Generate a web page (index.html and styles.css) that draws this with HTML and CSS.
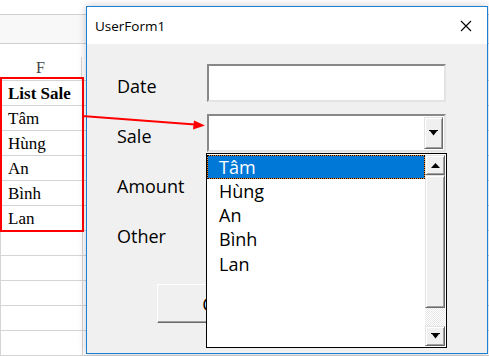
FILE: index.html
```html
<!DOCTYPE html>
<html lang="en">
<head>
  <meta charset="UTF-8" />
  <title>UserForm1</title>
  <link rel="stylesheet" href="styles.css">
</head>
<body>
  <!-- worksheet behind the form -->
  <div class="sheet">
    <div class="sheet-bar"></div>
    <div class="sheet-formula"></div>
    <div class="sheet-head"><div class="col-f">F</div></div>
    <div class="row"><div class="cell bold">List Sale</div></div>
    <div class="row"><div class="cell">Tâm</div></div>
    <div class="row"><div class="cell">Hùng</div></div>
    <div class="row"><div class="cell">An</div></div>
    <div class="row"><div class="cell">Bình</div></div>
    <div class="row"><div class="cell">Lan</div></div>
    <div class="row"><div class="cell"></div></div>
    <div class="row"><div class="cell"></div></div>
    <div class="row"><div class="cell"></div></div>
    <div class="row"><div class="cell"></div></div>
    <div class="row"><div class="cell"></div></div>
  </div>
  <div class="mark-box"></div>

  <!-- the form window -->
  <div class="dialog">
    <div class="titlebar">
      <span class="title">UserForm1</span>
      <svg class="close" width="12" height="12" viewBox="0 0 12 12">
        <path d="M1 1 L11 11 M11 1 L1 11" stroke="#000" stroke-width="1.1" fill="none"/>
      </svg>
    </div>
    <div class="form">
      <div class="field-row">
        <label>Date</label>
        <div class="textbox"></div>
      </div>
      <div class="field-row">
        <label>Sale</label>
        <div class="combo-wrap">
          <div class="combo">
            <div class="combo-btn">
              <svg width="9" height="6" viewBox="0 0 9 6"><path d="M0 0 H9 V1 H8 L4.5 5.5 L1 1 H0 Z" fill="#000"/></svg>
            </div>
          </div>
          <div class="droplist">
            <div class="items">
              <div class="item selected">Tâm</div>
              <div class="item">Hùng</div>
              <div class="item">An</div>
              <div class="item">Bình</div>
              <div class="item">Lan</div>
            </div>
            <div class="scrollbar">
              <div class="sb-btn">
                <svg width="9" height="5" viewBox="0 0 9 5"><path d="M4.5 0 L9 5 H0 Z" fill="#000"/></svg>
              </div>
              <div class="sb-thumb"></div>
              <div class="sb-track"></div>
              <div class="sb-btn">
                <svg width="9" height="6" viewBox="0 0 9 6"><path d="M0 0 H9 V1 H8 L4.5 5.5 L1 1 H0 Z" fill="#000"/></svg>
              </div>
            </div>
          </div>
        </div>
      </div>
      <div class="field-row">
        <label>Amount</label>
        <div class="textbox"></div>
      </div>
      <div class="field-row">
        <label>Other</label>
        <div class="textbox"></div>
      </div>
      <div class="btn-row">
        <button class="btn">Clear</button>
      </div>
    </div>
  </div>

  <svg class="arrow" width="489" height="356" viewBox="0 0 489 356">
    <line x1="82" y1="116" x2="195" y2="124.5" stroke="#f00" stroke-width="2"/>
    <polygon points="205,125.5 193,129.5 194,120.5" fill="#f00"/>
  </svg>
</body>
</html>
```

FILE: styles.css
```css
body {
  margin: 0;
  width: 489px;
  height: 356px;
  overflow: hidden;
  position: relative;
  background: #fff;
}

/* worksheet */
.sheet {
  font-family: "Liberation Serif", serif;
  color: #000;
}

.sheet-bar {
  height: 14px;
  border-bottom: 1px solid #d0d0d0;
}

.sheet-formula {
  height: 28px;
  background: #f8f8f8;
  border-bottom: 1px solid #d0d0d0;
}

.sheet-head {
  height: 36px;
  display: flex;
  align-items: flex-end;
  border-bottom: 1px solid #d4d4d4;
}

.col-f {
  width: 81px;
  height: 23px;
  border-right: 1px solid #d4d4d4;
  text-align: center;
  font-size: 16px;
  line-height: 22px;
  color: #444;
}

.row {
  height: 24px;
  border-bottom: 1px solid #d4d4d4;
}

.cell {
  width: 74px;
  height: 24px;
  padding-left: 7px;
  border-right: 1px solid #d4d4d4;
  border-left: 1px solid #d4d4d4;
  font-size: 17px;
  line-height: 26px;
  white-space: nowrap;
}

.cell.bold {
  font-weight: bold;
}

.mark-box {
  position: absolute;
  left: 0;
  top: 77px;
  width: 80px;
  height: 151px;
  border: 2px solid #f00;
}

/* form window */
.dialog {
  position: absolute;
  left: 86px;
  top: 6px;
  width: 400px;
  height: 346px;
  border: 1px solid #1a7fd6;
  background: #f0f0f0;
  box-shadow: 0 0 8px rgba(0, 0, 0, 0.22);
  font-family: "Open Sans", sans-serif;
  color: #000;
}

.titlebar {
  height: 37px;
  background: #fff;
  display: flex;
  align-items: center;
  justify-content: space-between;
  padding: 0 15px 0 8px;
}

.title {
  font-size: 13.5px;
}

.close {
  margin-top: 1px;
}

.form {
  padding: 20px 0 0 30px;
}

.field-row {
  display: flex;
  align-items: center;
  height: 38px;
  margin-bottom: 12px;
}

.field-row label {
  width: 90px;
  font-size: 18px;
  padding-top: 5px;
}

.textbox {
  width: 235px;
  height: 34px;
  background: #fff;
  border: 2px solid;
  border-color: #888 #e3e3e3 #e3e3e3 #888;
}

.combo-wrap {
  position: relative;
}

.combo {
  width: 233px;
  height: 32px;
  padding: 1px;
  background: #fff;
  border: 2px solid;
  border-color: #888 #e3e3e3 #e3e3e3 #888;
  display: flex;
  justify-content: flex-end;
}

.combo-btn {
  width: 17px;
  height: 30px;
  background: #f0f0f0;
  border: 1px solid;
  border-color: #e3e3e3 #696969 #696969 #e3e3e3;
  box-shadow: inset 1px 1px #fff, inset -1px -1px #a0a0a0;
  display: flex;
  align-items: center;
  justify-content: center;
}

.droplist {
  position: absolute;
  left: -1px;
  top: 39px;
  width: 238px;
  height: 191px;
  padding: 1px 1px 1px 0;
  border: 1px solid #000;
  background: #fff;
  display: flex;
}

.items {
  flex: 1;
  font-size: 18px;
}

.item {
  height: 24.2px;
  line-height: 24px;
  padding-left: 12px;
}

.item.selected {
  color: #fff;
  border: 1px dotted #000;
  background: linear-gradient(#0078d7, #0078d7) padding-box, linear-gradient(#e8892a, #e8892a) border-box;
  height: 22px;
  line-height: 22px;
  padding-left: 11px;
}

.scrollbar {
  width: 20px;
  display: flex;
  flex-direction: column;
}

.sb-btn,
.sb-thumb {
  background: #f0f0f0;
  border: 1px solid;
  border-color: #e3e3e3 #696969 #696969 #e3e3e3;
  box-shadow: inset 1px 1px #fff, inset -1px -1px #a0a0a0;
}

.sb-btn {
  height: 18px;
  display: flex;
  align-items: center;
  justify-content: center;
}

.sb-thumb {
  flex: 1;
}

.sb-track {
  height: 18px;
  background: repeating-conic-gradient(#e6e6e6 0 25%, #fff 0 50%) 0 0 / 2px 2px;
}

.btn-row {
  padding: 20px 0 0 40px;
}

.btn {
  width: 134px;
  height: 39px;
  background: #f0f0f0;
  border: 1px solid;
  border-color: #fff #696969 #696969 #fff;
  box-shadow: inset -1px -1px #a0a0a0;
  font-family: "Open Sans", sans-serif;
  font-size: 18px;
  padding: 0;
  text-align: center;
}

.arrow {
  position: absolute;
  left: 0;
  top: 0;
  pointer-events: none;
}
```
